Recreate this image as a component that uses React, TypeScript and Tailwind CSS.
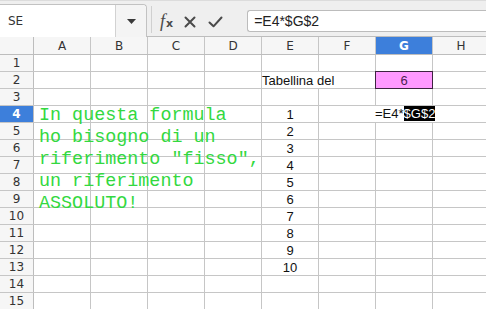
import React from "react";

const COLS = ["A", "B", "C", "D", "E", "F", "G", "H"];
const ROWS = Array.from({ length: 15 }, (_, i) => i + 1);

function Cell({ row, col }: { row: number; col: string }) {
  const base =
    "relative h-full w-[57px] shrink-0 border-r border-[#c6c6c6] flex items-center";
  if (col === "E" && row === 2) {
    return (
      <div className={`${base} border-r-transparent`}>
        <span className="whitespace-nowrap text-[13px] leading-none text-[#111] font-['Liberation_Sans',sans-serif]">
          Tabellina del
        </span>
      </div>
    );
  }
  if (col === "E" && row >= 4 && row <= 13) {
    return (
      <div className={`${base} justify-center`}>
        <span className="text-[13px] leading-none text-[#111] font-['Liberation_Sans',sans-serif]">
          {row - 3}
        </span>
      </div>
    );
  }
  if (col === "G" && row === 2) {
    return (
      <div className={base}>
        <div className="absolute -left-px -top-px -right-px -bottom-px border border-[#3d2340] bg-[#ff99ff] flex items-center justify-center">
          <span className="text-[13px] leading-none text-[#4a1f50] font-['Liberation_Sans',sans-serif]">
            6
          </span>
        </div>
      </div>
    );
  }
  if (col === "G" && row === 4) {
    return (
      <div className={base}>
        <div className="absolute -left-px top-0 h-[16px] w-[62px] z-10 bg-white whitespace-nowrap text-[13px] leading-[16px] text-[#111] font-['Liberation_Sans',sans-serif]">
          =E4*<span className="bg-black text-white">$G$2</span>
        </div>
      </div>
    );
  }
  return <div className={base} />;
}

export default function App() {
  return (
    <div className="relative w-[486px] h-[309px] overflow-hidden bg-white font-['DejaVu_Sans',sans-serif]">
      {/* Toolbar */}
      <div className="h-[37px] bg-[#efefef] border-b border-[#bdbdbd] flex border-t border-t-[#dcdcdc]">
        <div className="mt-[3px] h-[33px] w-[147px] shrink-0 flex bg-white border-t border-r border-[#c2c2c2] rounded-tr-[4px]">
          <div className="w-[115px] flex items-center pl-[8px] text-[12px] text-[#333]">
            SE
          </div>
          <div className="flex-1 flex items-center justify-center bg-[#f4f4f4] border-l border-[#d2d2d2] rounded-tr-[4px]">
            <svg width="9" height="5" viewBox="0 0 9 5">
              <path d="M0 0 L9 0 L4.5 5 Z" fill="#3a3a3a" />
            </svg>
          </div>
        </div>
        <div className="ml-[4px] mt-[5px] w-px h-[27px] bg-[#d0d0d0]" />
        <div className="ml-[8px] mt-[12px] flex items-start h-[20px] text-[#4a4a4a]">
          <span className="italic font-['Liberation_Serif',serif] text-[18px] leading-[17px]">
            f
          </span>
          <span className="mt-[5px] ml-[1px] text-[11px] leading-[11px] font-bold">
            x
          </span>
        </div>
        <svg className="ml-[11px] mt-[15px]" width="12" height="12" viewBox="0 0 12 12">
          <path
            d="M1.5 1.5 L10.5 10.5 M10.5 1.5 L1.5 10.5"
            stroke="#4a4a4a"
            strokeWidth="2"
            strokeLinecap="round"
          />
        </svg>
        <svg className="ml-[12px] mt-[15px]" width="15" height="12" viewBox="0 0 15 12">
          <path
            d="M1.5 6.5 L5.5 10.3 L13.5 1.5"
            stroke="#4a4a4a"
            strokeWidth="2"
            fill="none"
            strokeLinecap="round"
            strokeLinejoin="round"
          />
        </svg>
        <div className="ml-[24px] mt-[9px] h-[22px] flex-1 flex items-center bg-white border border-r-0 border-[#bcbcbc] rounded-l-[3px] pl-[6px] text-[14px] text-[#222] font-['Liberation_Sans',sans-serif]">
          =E4*$G$2
        </div>
      </div>

      {/* Column headers */}
      <div className="h-[18px] flex border-b border-[#bdbdbd] bg-[#f6f6f6]">
        <div className="w-[34px] shrink-0 border-r border-[#bdbdbd]" />
        {COLS.map((c) => (
          <div
            key={c}
            className={`w-[57px] shrink-0 border-r border-[#c6c6c6] flex items-center justify-center text-[12px] leading-none ${
              c === "G" ? "bg-[#3d7fdb] text-white font-bold" : "text-[#333]"
            }`}
          >
            {c}
          </div>
        ))}
      </div>

      {/* Rows */}
      {ROWS.map((r) => (
        <div key={r} className="h-[17px] flex border-b border-[#c6c6c6]">
          <div
            className={`w-[34px] shrink-0 border-r border-[#bdbdbd] flex items-center justify-center text-[12px] leading-none ${
              r === 4 ? "bg-[#3d7fdb] text-white font-bold" : "bg-[#f6f6f6] text-[#333]"
            }`}
          >
            {r}
          </div>
          {COLS.map((c) => (
            <Cell key={c} row={r} col={c} />
          ))}
        </div>
      ))}

      {/* Overflowing green text from A4 */}
      <div className="absolute left-[39px] top-[105px] whitespace-pre text-[18.4px] leading-[22px] text-[#33d83f] font-['Liberation_Mono',monospace]">
        {'In questa formula\nho bisogno di un\nriferimento "fisso",\nun riferimento\nASSOLUTO!'}
      </div>
    </div>
  );
}
